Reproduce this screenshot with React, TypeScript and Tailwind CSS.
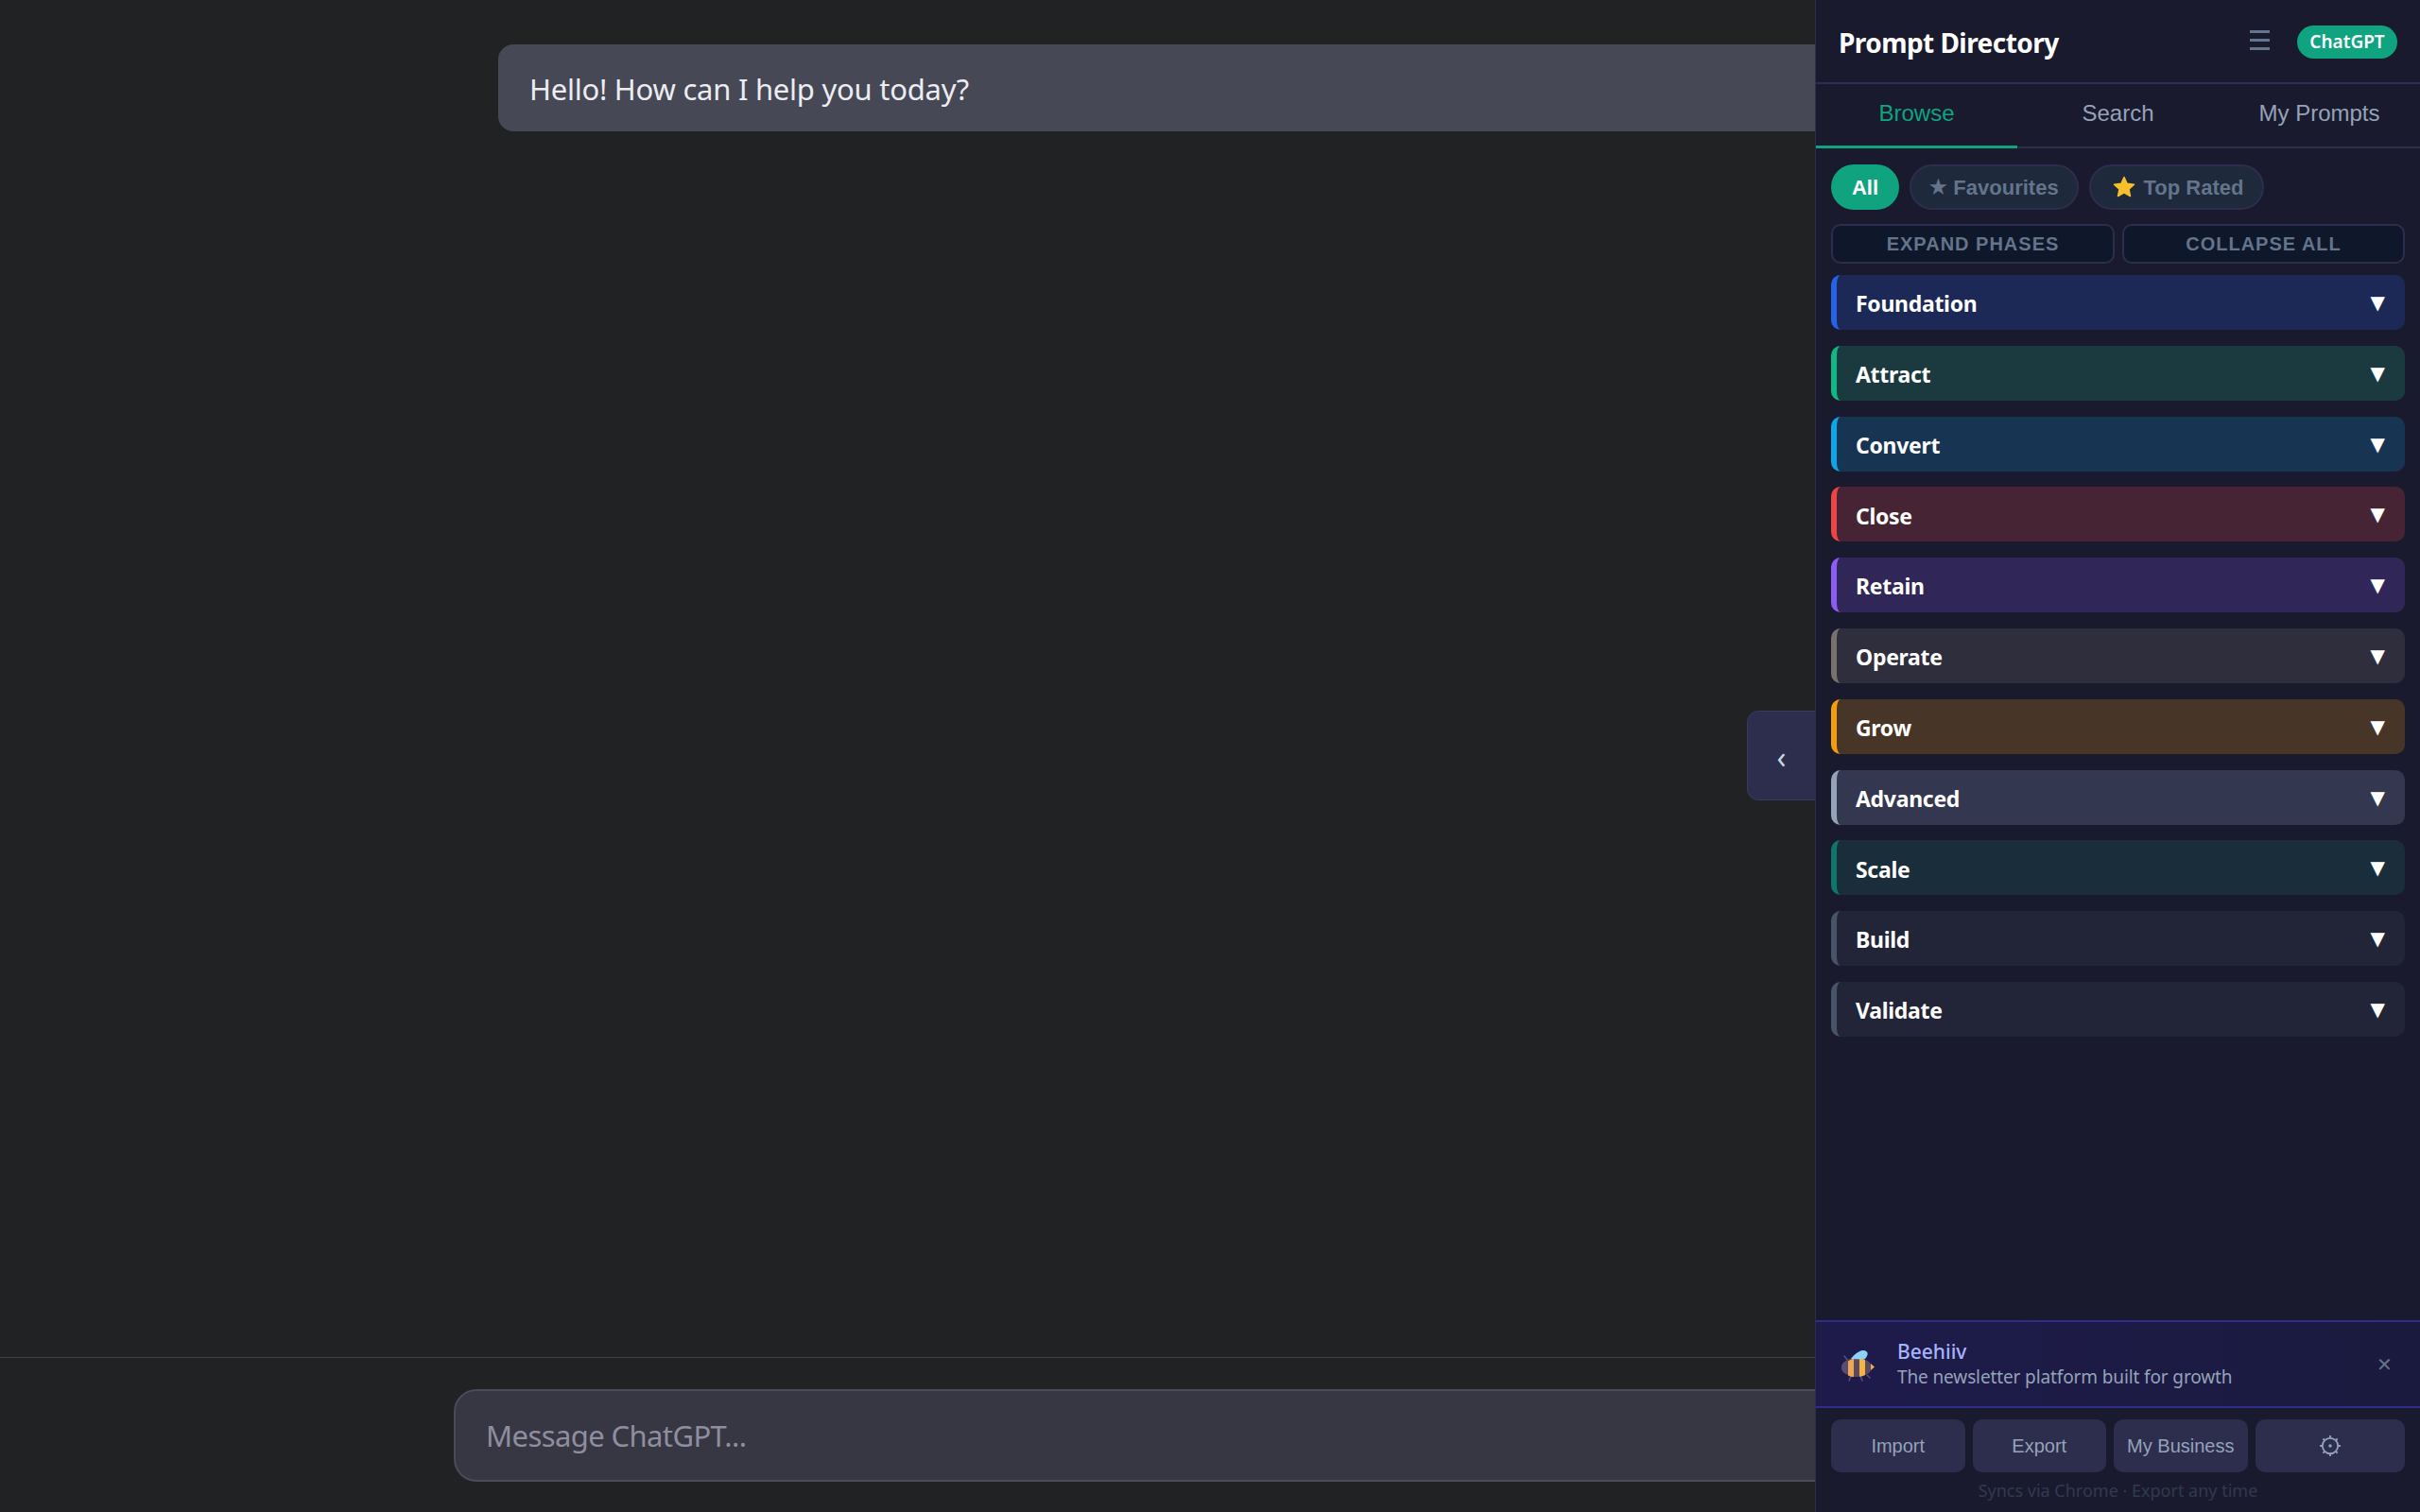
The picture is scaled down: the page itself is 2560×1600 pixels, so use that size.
const phases = [
  { name: "Foundation", row: "bg-[#1c2957] border-[#2563eb]" },
  { name: "Attract", row: "bg-[#1a3a3f] border-[#10b981]" },
  { name: "Convert", row: "bg-[#183453] border-[#0ea5e9]" },
  { name: "Close", row: "bg-[#472433] border-[#ef4444]" },
  { name: "Retain", row: "bg-[#312658] border-[#8b5cf6]" },
  { name: "Operate", row: "bg-[#2e2e3c] border-[#78716c]" },
  { name: "Grow", row: "bg-[#473528] border-[#f59e0b]" },
  { name: "Advanced", row: "bg-[#343750] border-[#94a3b8]" },
  { name: "Scale", row: "bg-[#192d3b] border-[#0f766e]" },
  { name: "Build", row: "bg-[#222438] border-[#475569]" },
  { name: "Validate", row: "bg-[#222438] border-[#475569]" },
]

function BeeIcon() {
  return (
    <svg className="mt-[4px]" width="36" height="36" viewBox="0 0 36 36" fill="none">
      <path d="M3 7l4 5M10 28l-2 5M20 28l2 5M27 27l3 3" stroke="#5b4a7a" strokeWidth="1.600" strokeLinecap="round" />
      <ellipse cx="16" cy="19" rx="16" ry="10" fill="#5b4a63" />
      <circle cx="7" cy="19" r="7" fill="#5a4a78" />
      <path d="M7 12.500c2-1.500 4-2.500 6-3V29c-2 0-4-.5-6-1.500z" fill="#f0a850" />
      <path d="M19 9.200c2 .3 4 1 6 2V27c-2 1-4 1.600-6 1.800z" fill="#f5b63f" />
      <path d="M31 15l4 3.500-4 3.500z" fill="#e9b04a" />
      <path d="M10 10c2-3 7-8 12-9 4-.5 7 2 5 6-1 2-2 3-3 3.500z" fill="#8fd0f5" />
    </svg>
  )
}

function GearIcon() {
  return (
    <svg width="24" height="24" viewBox="0 0 22 22" fill="none" stroke="#94a3b8">
      <circle cx="11" cy="11" r="7.500" strokeWidth="1.700" />
      <circle cx="11" cy="11" r="1.600" fill="#94a3b8" stroke="none" />
      <path d="M11 1v2.500M11 18.500V21M1 11h2.500M18.500 11H21M4 4l1.500 1.500M16.500 16.500L18 18M18 4l-1.500 1.500M5.500 16.500L4 18" strokeWidth="1.700" />
    </svg>
  )
}

export default function App() {
  return (
    <div className="relative h-[1600px] w-[2560px] overflow-hidden bg-[#212224] font-['Noto_Sans',sans-serif]">
      {/* chat column */}
      <div className="flex h-full flex-col">
        <div className="flex-1 pt-[47px] pl-[527px] pr-[527px]">
          <div className="flex h-[92px] items-center rounded-[16px] bg-[#464855] px-[33px] pt-[2px] text-[31px] tracking-[-0.250px] text-[#ececf1]">
            Hello! How can I help you today?
          </div>
        </div>
        <div className="h-[164px] border-t border-[#3f3f4e] px-[480px] pt-[33px]">
          <div className="flex h-[98px] items-center rounded-[24px] border-2 border-[#4a4a5a] bg-[#373743] px-[32px] text-[31px] tracking-[-0.600px] text-[#8e8ea0]">
            Message ChatGPT...
          </div>
        </div>
      </div>

      {/* collapse handle */}
      <div className="absolute left-[1848px] top-[752px] flex h-[95px] w-[73px] items-center justify-center rounded-l-[12px] border border-[#3a3a5e] bg-[#2d2d4e] pt-[2px] text-[32px] text-[#cbd5e1]">
        ‹
      </div>

      {/* sidebar */}
      <aside className="absolute right-0 top-0 flex h-full w-[640px] flex-col border-l border-[#2d2d4e] bg-[#1a1a2e]">
        <header className="flex h-[89px] items-center justify-between border-b-2 border-[#2d2d4e] pl-[24px] pr-[24px]">
          <h1 className="pt-[3px] text-[28px] font-bold tracking-[-0.550px] text-white">Prompt Directory</h1>
          <div className="flex items-center gap-[29px]">
            <svg className="-mt-[3px]" width="21" height="21" viewBox="0 0 21 21" fill="#64748b">
              <rect y="0" width="21" height="3" />
              <rect y="9" width="21" height="3" />
              <rect y="18" width="21" height="3" />
            </svg>
            <span className="mt-[2px] flex h-[35px] w-[106px] items-center justify-center rounded-full bg-[#10a37f] text-[19px] font-semibold text-white">
              ChatGPT
            </span>
          </div>
        </header>

        <nav className="flex h-[68px] border-b-2 border-[#2d2d4e] font-['Liberation_Sans',sans-serif] text-[24px] text-[#94a3b8]">
          <div className="-mb-[2px] flex flex-1 items-center justify-center border-b-[3px] border-[#10a37f] pb-[3px] text-[#10a37f]">Browse</div>
          <div className="flex flex-1 items-center justify-center pb-[4px]">Search</div>
          <div className="flex flex-1 items-center justify-center pb-[4px]">My Prompts</div>
        </nav>

        <div className="flex-1 px-[16px] pt-[17px]">
          <div className="flex gap-[11px] font-['Liberation_Sans',sans-serif] text-[22px] font-bold">
            <div className="flex h-[48px] w-[72px] items-center justify-center rounded-full bg-[#10a37f] text-white">All</div>
            <div className="flex h-[48px] w-[179px] items-center justify-center gap-[6px] rounded-full border-2 border-[#2d2d4e] bg-[#1e293b] text-[#64748b]">
              <span className="text-[21px]">★</span>
              Favourites
            </div>
            <div className="flex h-[48px] w-[185px] items-center justify-center gap-[9px] rounded-full border-2 border-[#2d2d4e] bg-[#1e293b] pl-[3px] text-[#64748b]">
              <svg width="24" height="24" viewBox="0 0 24 24">
                <path d="M12 1.500l3.100 6.800 7.400.9-5.500 5 1.500 7.300-6.500-3.700-6.500 3.700 1.500-7.300-5.500-5 7.400-.9z" fill="#f5c02c" stroke="#f5c02c" strokeWidth="1.500" strokeLinejoin="round" />
              </svg>
              Top Rated
            </div>
          </div>

          <div className="mt-[15px] flex gap-[8px] font-['Liberation_Sans',sans-serif] text-[20px] font-bold tracking-[1px] text-[#64748b]">
            <div className="flex h-[42px] w-[300px] items-center justify-center rounded-[10px] border-2 border-[#2d2d4e] bg-[#0f172a]">EXPAND PHASES</div>
            <div className="flex h-[42px] w-[299px] items-center justify-center rounded-[10px] border-2 border-[#2d2d4e] bg-[#0f172a]">COLLAPSE ALL</div>
          </div>

          <div className="mt-[12px] flex flex-col gap-[16.800px]">
            {phases.map((phase) => (
              <div
                key={phase.name}
                className={`flex h-[58px] items-center justify-between rounded-[10px] border-l-[6px] pl-[20px] pr-[21px] ${phase.row}`}
              >
                <span className="pt-[3px] text-[23px] font-bold tracking-[-0.300px] text-white">{phase.name}</span>
                <span className="font-['DejaVu_Sans',sans-serif] text-[20px] text-white">▼</span>
              </div>
            ))}
          </div>
        </div>

        <div className="flex h-[93px] items-center border-y-2 border-[#2f2c8a] bg-gradient-to-r from-[#1e1b4b] to-[#1a1a3e] pl-[27px] pr-[29px]">
          <BeeIcon />
          <div className="ml-[23px] flex-1">
            <div className="text-[21px] font-medium leading-[27px] text-[#a5b4fc]">Beehiiv</div>
            <div className="text-[19px] leading-[27px] tracking-[-0.120px] text-[#94a3b8]">The newsletter platform built for growth</div>
          </div>
          <span className="text-[20px] text-[#64748b]">✕</span>
        </div>

        <div className="flex gap-[8px] px-[16px] pt-[12px] font-['Liberation_Sans',sans-serif] text-[20px] text-[#94a3b8]">
          <div className="flex h-[56px] w-[142px] items-center justify-center rounded-[10px] bg-[#2d2d4e]">Import</div>
          <div className="flex h-[56px] w-[142px] items-center justify-center rounded-[10px] bg-[#2d2d4e]">Export</div>
          <div className="flex h-[56px] w-[142px] items-center justify-center rounded-[10px] bg-[#2d2d4e]">My Business</div>
          <div className="flex h-[56px] w-[159px] items-center justify-center rounded-[10px] bg-[#2d2d4e]">
            <GearIcon />
          </div>
        </div>

        <div className="flex h-[42px] items-center justify-center pb-[3px] text-[18px] text-[#2f3b50]">
          Syncs via Chrome · Export any time
        </div>
      </aside>
    </div>
  )
}
